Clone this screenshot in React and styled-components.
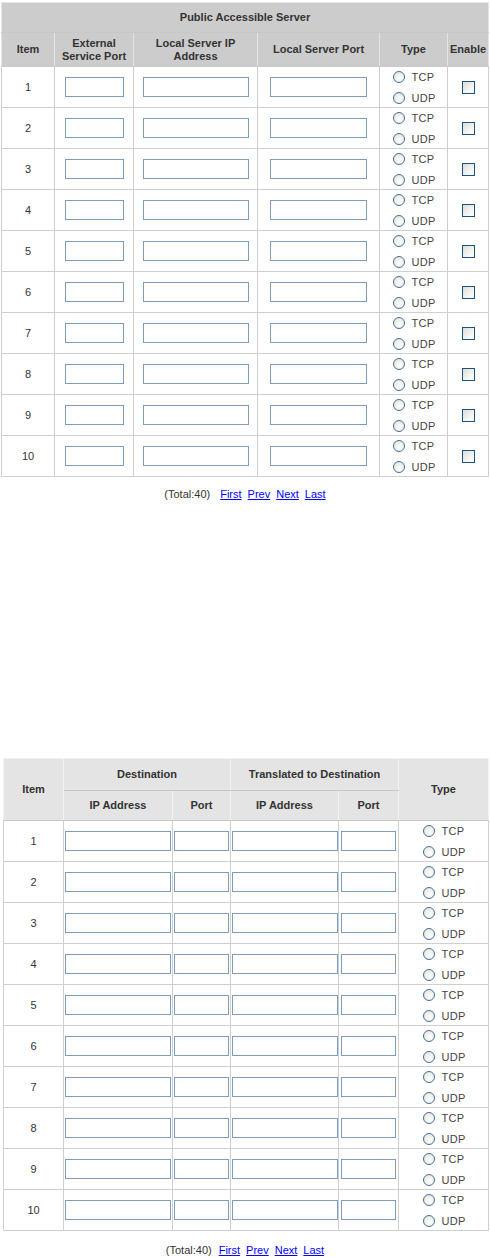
import React from 'react';
import styled, { createGlobalStyle } from 'styled-components';

const GlobalStyle = createGlobalStyle`
  body {
    margin: 0;
    background: #fff;
    font-family: "Liberation Sans", Arial, sans-serif;
    font-size: 11px;
    color: #333;
  }
`;

const Page = styled.div`
  width: 490px;
  display: flex;
  flex-direction: column;
`;

const Grid = styled.table`
  table-layout: fixed;
  border-collapse: collapse;
  width: ${(p) => p.$width}px;
  margin: ${(p) => p.$margin};
  border: 1px solid #c8c8c8;
`;

const HeadCell = styled.th`
  background: ${(p) => p.$bg};
  border: 1px solid ${(p) => p.$line};
  border-bottom-color: #c8c8c8;
  height: ${(p) => p.$height}px;
  padding: 0 2px;
  font-size: 11px;
  font-weight: bold;
  line-height: 13px;
  color: #333;
  text-align: center;
  vertical-align: middle;
`;

const Row = styled.tr`
  height: 41px;
`;

const Cell = styled.td`
  border: 1px solid #cfcfcf;
  padding: 0;
  text-align: center;
  vertical-align: middle;
  font-size: 11px;
  color: #333;
`;

const TextBox = styled.input`
  box-sizing: border-box;
  width: ${(p) => p.$width}px;
  height: 20px;
  margin: 0;
  padding: 0 2px;
  border: 1px solid #7f9db9;
  background: #fff;
  vertical-align: middle;
`;

const RadioGroup = styled.div`
  display: inline-flex;
  flex-direction: column;
  align-items: flex-start;
  gap: 3px;
  padding-left: 2px;
  vertical-align: middle;
`;

const RadioLabel = styled.label`
  display: flex;
  align-items: center;
  gap: 6px;
  height: 18px;
  font-size: 11px;
  color: #444;
  letter-spacing: 0.3px;
`;

const Radio = styled.input.attrs({ type: 'radio' })`
  appearance: none;
  box-sizing: border-box;
  width: 12px;
  height: 12px;
  margin: 0;
  border-radius: 50%;
  border: 1px solid #46709a;
  background: radial-gradient(circle at 60% 65%, #ffffff 0%, #e6e6e0 80%);
`;

const Check = styled.input.attrs({ type: 'checkbox' })`
  appearance: none;
  box-sizing: border-box;
  width: 13px;
  height: 13px;
  margin: 0;
  border: 1px solid #1c5180;
  background: linear-gradient(135deg, #dcdcd7 0%, #f4f4f2 60%, #ffffff 100%);
  vertical-align: middle;
`;

const Pager = styled.div`
  display: flex;
  justify-content: center;
  gap: 6px;
  margin-top: ${(p) => p.$top}px;
  line-height: 14px;
  font-size: 11px;
  color: #333;
`;

const Total = styled.span`
  margin-right: ${(p) => p.$gap}px;
`;

const PageLink = styled.a`
  color: #0000ff;
  text-decoration: underline;
`;

const rows = Array.from({ length: 10 }, (_, i) => i + 1);

function ProtocolChoice({ name }) {
  return (
    <RadioGroup>
      <RadioLabel>
        <Radio name={name} />
        TCP
      </RadioLabel>
      <RadioLabel>
        <Radio name={name} />
        UDP
      </RadioLabel>
    </RadioGroup>
  );
}

function Pagination({ top, gap }) {
  return (
    <Pager $top={top}>
      <Total $gap={gap}>(Total:40)</Total>
      <PageLink href="#">First</PageLink>
      <PageLink href="#">Prev</PageLink>
      <PageLink href="#">Next</PageLink>
      <PageLink href="#">Last</PageLink>
    </Pager>
  );
}

function PublicServerTable() {
  const head = { $bg: '#cccccc', $line: '#e4e4e4' };
  return (
    <Grid $width={487} $margin="2px 0 0 1px">
      <colgroup>
        <col style={{ width: 53 }} />
        <col style={{ width: 79 }} />
        <col style={{ width: 124 }} />
        <col style={{ width: 122 }} />
        <col style={{ width: 68 }} />
        <col style={{ width: 41 }} />
      </colgroup>
      <thead>
        <tr>
          <HeadCell {...head} $height={29} colSpan={6}>
            Public Accessible Server
          </HeadCell>
        </tr>
        <tr>
          <HeadCell {...head} $height={33}>Item</HeadCell>
          <HeadCell {...head} $height={33}>
            External
            <br />
            Service Port
          </HeadCell>
          <HeadCell {...head} $height={33}>
            Local Server IP
            <br />
            Address
          </HeadCell>
          <HeadCell {...head} $height={33}>Local Server Port</HeadCell>
          <HeadCell {...head} $height={33}>Type</HeadCell>
          <HeadCell {...head} $height={33}>Enable</HeadCell>
        </tr>
      </thead>
      <tbody>
        {rows.map((n) => (
          <Row key={n}>
            <Cell>{n}</Cell>
            <Cell>
              <TextBox $width={59} />
            </Cell>
            <Cell>
              <TextBox $width={106} />
            </Cell>
            <Cell>
              <TextBox $width={97} />
            </Cell>
            <Cell>
              <ProtocolChoice name={`pub-${n}`} />
            </Cell>
            <Cell>
              <Check />
            </Cell>
          </Row>
        ))}
      </tbody>
    </Grid>
  );
}

function TranslationTable() {
  const head = { $bg: '#e4e4e4', $line: '#f2f2f2' };
  return (
    <Grid $width={485} $margin="257px 0 0 3px">
      <colgroup>
        <col style={{ width: 60 }} />
        <col style={{ width: 109 }} />
        <col style={{ width: 58 }} />
        <col style={{ width: 108 }} />
        <col style={{ width: 60 }} />
        <col style={{ width: 90 }} />
      </colgroup>
      <thead>
        <tr>
          <HeadCell {...head} $height={31} rowSpan={2}>Item</HeadCell>
          <HeadCell {...head} $height={31} colSpan={2}>Destination</HeadCell>
          <HeadCell {...head} $height={31} colSpan={2}>Translated to Destination</HeadCell>
          <HeadCell {...head} $height={31} rowSpan={2}>Type</HeadCell>
        </tr>
        <tr>
          <HeadCell {...head} $height={29}>IP Address</HeadCell>
          <HeadCell {...head} $height={29}>Port</HeadCell>
          <HeadCell {...head} $height={29}>IP Address</HeadCell>
          <HeadCell {...head} $height={29}>Port</HeadCell>
        </tr>
      </thead>
      <tbody>
        {rows.map((n) => (
          <Row key={n}>
            <Cell>{n}</Cell>
            <Cell>
              <TextBox $width={106} />
            </Cell>
            <Cell>
              <TextBox $width={55} />
            </Cell>
            <Cell>
              <TextBox $width={106} />
            </Cell>
            <Cell>
              <TextBox $width={55} />
            </Cell>
            <Cell>
              <ProtocolChoice name={`nat-${n}`} />
            </Cell>
          </Row>
        ))}
      </tbody>
    </Grid>
  );
}

export default function App() {
  return (
    <>
      <GlobalStyle />
      <Page>
        <PublicServerTable />
        <Pagination top={10} gap={4} />
        <TranslationTable />
        <Pagination top={12} gap={1} />
      </Page>
    </>
  );
}
